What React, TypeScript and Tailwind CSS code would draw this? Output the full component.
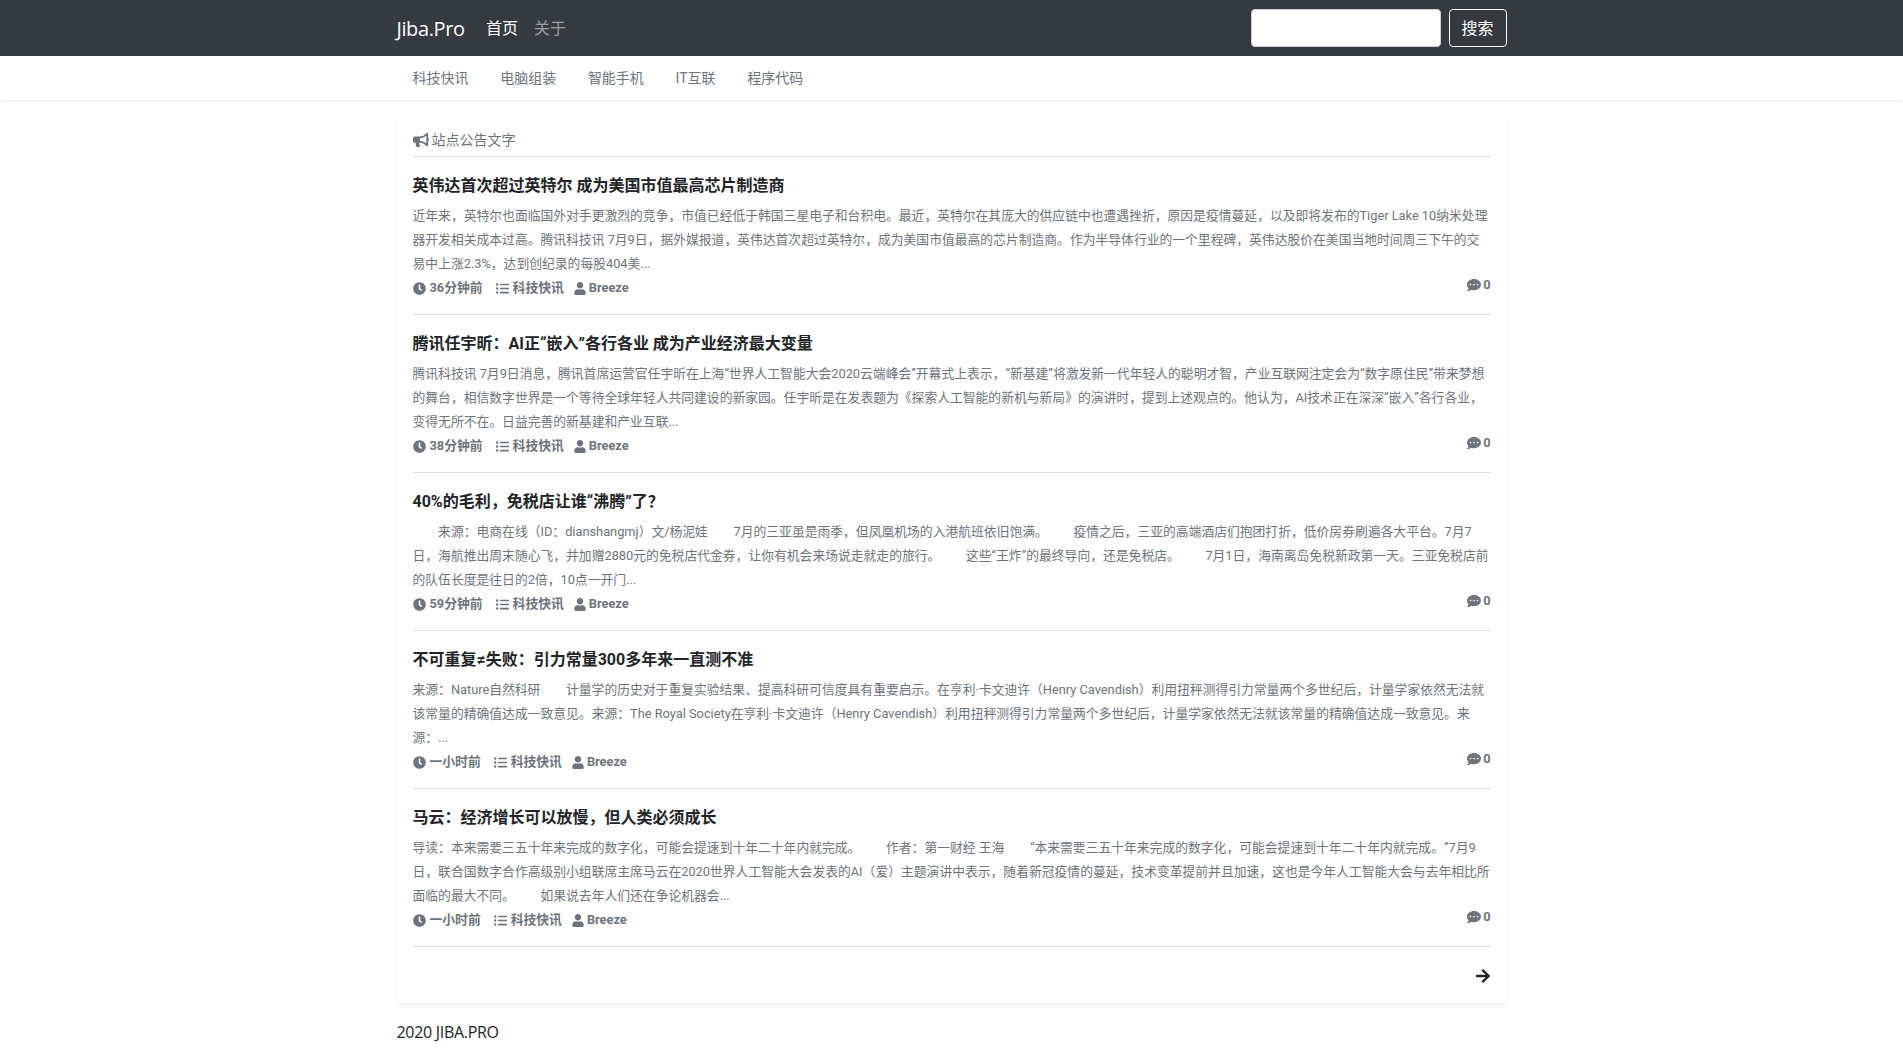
import React from 'react';
import { FaBullhorn, FaClock, FaListUl, FaUser, FaCommentDots, FaArrowRight } from 'react-icons/fa';

const categories = ['科技快讯', '电脑组装', '智能手机', 'IT互联', '程序代码'];

interface Post {
  title: string;
  lines: string[];
  time: string;
}

const posts: Post[] = [
  {
    title: '英伟达首次超过英特尔 成为美国市值最高芯片制造商',
    lines: [
      '近年来，英特尔也面临国外对手更激烈的竞争，市值已经低于韩国三星电子和台积电。最近，英特尔在其庞大的供应链中也遭遇挫折，原因是疫情蔓延，以及即将发布的Tiger Lake 10纳米处理',
      '器开发相关成本过高。腾讯科技讯 7月9日，据外媒报道，英伟达首次超过英特尔，成为美国市值最高的芯片制造商。作为半导体行业的一个里程碑，英伟达股价在美国当地时间周三下午的交',
      '易中上涨2.3%，达到创纪录的每股404美...',
    ],
    time: '36分钟前',
  },
  {
    title: '腾讯任宇昕：AI正“嵌入”各行各业 成为产业经济最大变量',
    lines: [
      '腾讯科技讯 7月9日消息，腾讯首席运营官任宇昕在上海“世界人工智能大会2020云端峰会”开幕式上表示，“新基建”将激发新一代年轻人的聪明才智，产业互联网注定会为“数字原住民”带来梦想',
      '的舞台，相信数字世界是一个等待全球年轻人共同建设的新家园。任宇昕是在发表题为《探索人工智能的新机与新局》的演讲时，提到上述观点的。他认为，AI技术正在深深“嵌入”各行各业，',
      '变得无所不在。日益完善的新基建和产业互联...',
    ],
    time: '38分钟前',
  },
  {
    title: '40%的毛利，免税店让谁“沸腾”了？',
    lines: [
      '\u3000\u3000来源：电商在线（ID：dianshangmj）文/杨泥娃\u3000\u30007月的三亚虽是雨季，但凤凰机场的入港航班依旧饱满。\u3000\u3000疫情之后，三亚的高端酒店们抱团打折，低价房券刷遍各大平台。7月7',
      '日，海航推出周末随心飞，并加赠2880元的免税店代金券，让你有机会来场说走就走的旅行。\u3000\u3000这些“王炸”的最终导向，还是免税店。\u3000\u30007月1日，海南离岛免税新政第一天。三亚免税店前',
      '的队伍长度是往日的2倍，10点一开门...',
    ],
    time: '59分钟前',
  },
  {
    title: '不可重复≠失败：引力常量300多年来一直测不准',
    lines: [
      '来源：Nature自然科研\u3000\u3000计量学的历史对于重复实验结果、提高科研可信度具有重要启示。在亨利·卡文迪许（Henry Cavendish）利用扭秤测得引力常量两个多世纪后，计量学家依然无法就',
      '该常量的精确值达成一致意见。来源：The Royal Society在亨利·卡文迪许（Henry Cavendish）利用扭秤测得引力常量两个多世纪后，计量学家依然无法就该常量的精确值达成一致意见。来',
      '源：...',
    ],
    time: '一小时前',
  },
  {
    title: '马云：经济增长可以放慢，但人类必须成长',
    lines: [
      '导读：本来需要三五十年来完成的数字化，可能会提速到十年二十年内就完成。\u3000\u3000作者：第一财经 王海\u3000\u3000“本来需要三五十年来完成的数字化，可能会提速到十年二十年内就完成。”7月9',
      '日，联合国数字合作高级别小组联席主席马云在2020世界人工智能大会发表的AI（爱）主题演讲中表示，随着新冠疫情的蔓延，技术变革提前并且加速，这也是今年人工智能大会与去年相比所',
      '面临的最大不同。\u3000\u3000如果说去年人们还在争论机器会...',
    ],
    time: '一小时前',
  },
];

export default function App() {
  return (
    <div className="min-h-[1059px] bg-white text-[#212529] [text-spacing-trim:space-all] font-['Roboto','Noto_Sans_CJK_SC',sans-serif]">
      {/* top navbar */}
      <nav className="h-14 bg-[#343a40]">
        <div className="mx-auto flex h-full max-w-[1140px] items-center px-[15px]">
          <a className="w-[89.5px] pt-[2px] font-['Open_Sans','Noto_Sans_CJK_SC',sans-serif] text-xl tracking-[-0.4px] text-white">
            Jiba.Pro
          </a>
          <a className="pt-[2px] text-base text-white">首页</a>
          <a className="ml-4 pt-[2px] text-base text-white/50">关于</a>
          <input className="ml-auto h-[38px] w-[190px] rounded border border-[#ced4da] bg-white" />
          <button className="ml-2 h-[38px] w-[58px] rounded border border-white pt-[2px] text-base text-white">搜索</button>
        </div>
      </nav>

      {/* category bar */}
      <div className="h-11 bg-white shadow-[0_2px_4px_rgba(0,0,0,0.075)]">
        <div className="mx-auto flex h-full max-w-[1140px] items-center px-[31px] text-sm text-[#6c757d]">
          {categories.map((name) => (
            <a key={name} className="mr-[31.7px]">
              {name}
            </a>
          ))}
        </div>
      </div>

      <main className="mx-auto max-w-[1140px] px-[15px] pt-4">
        <div className="rounded bg-white px-4 shadow-[0_2px_4px_rgba(0,0,0,0.075)]">
          <div className="flex h-[41px] items-center gap-[3px] border-b border-[#dee2e6] pt-[8px] text-sm text-[#6c757d]">
            <FaBullhorn className="h-4 w-4" />
            <span>站点公告文字</span>
          </div>

          {posts.map((post) => (
            <article key={post.title} className="border-b border-[#dee2e6] pt-[17px] pb-[14px]">
              <h5 className="mb-[6px] text-base leading-6 font-bold text-[#212529]">{post.title}</h5>
              <p className="text-[12.8px] leading-6 whitespace-nowrap text-[#6c757d]">
                {post.lines.map((line) => (
                  <span key={line} className="block">
                    {line}
                  </span>
                ))}
              </p>
              <div className="flex h-6 items-center text-[12.8px] font-bold text-[#6c757d]">
                <span className="flex items-center gap-[4px]">
                  <FaClock className="h-[13px] w-[13px]" />
                  {post.time}
                </span>
                <span className="ml-[13px] flex items-center gap-[4px]">
                  <FaListUl className="h-[13px] w-[13px]" />
                  科技快讯
                </span>
                <span className="ml-[10px] flex items-center gap-[3px]">
                  <FaUser className="h-[13px] w-[12px]" />
                  Breeze
                </span>
                <span className="ml-auto mb-[6px] flex items-center gap-[2px]">
                  <FaCommentDots className="h-[14px] w-[14px]" />0
                </span>
              </div>
            </article>
          ))}

          <div className="flex h-14 items-center justify-end pt-[2px]">
            <FaArrowRight className="h-[16px] w-[16px] text-[#212529]" />
          </div>
        </div>

        <footer className="mt-[17px] font-['Open_Sans','Noto_Sans_CJK_SC',sans-serif] text-base leading-6 tracking-[-0.3px]">
          2020 JIBA.PRO
        </footer>
      </main>
    </div>
  );
}
